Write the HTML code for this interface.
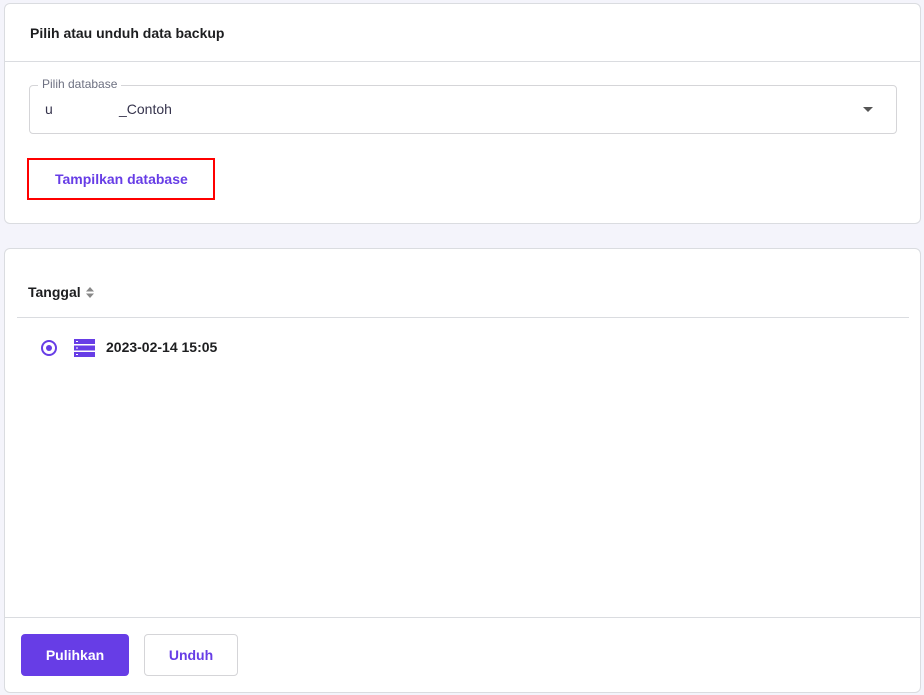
<!DOCTYPE html><html><head><style>
body{margin:0;width:924px;height:695px;background:#f4f4fb;font-family:"Liberation Sans",sans-serif;position:relative;overflow:hidden}
.c{position:absolute;background:#fff;border:1px solid #dadce0;border-radius:6px;box-sizing:border-box}
.a{position:absolute}
</style></head><body>
<div class="c" style="left:4px;top:3px;width:917px;height:221px">
<div class="a" style="left:25px;top:21px;font-size:14px;font-weight:bold;color:#1d1e20">Pilih atau unduh data backup</div>
<div class="a" style="left:0;top:57px;width:915px;border-top:1px solid #dadce0"></div>
<div class="a" style="left:24px;top:81px;width:866px;height:47px;border:1px solid #d5d5d8;border-radius:4px"></div>
<div class="a" style="left:33px;top:73px;background:#fff;padding:0 4px;font-size:12px;color:#6d7081">Pilih database</div>
<div class="a" style="left:40px;top:97px;font-size:14px;color:#36344d">u</div>
<div class="a" style="left:114px;top:97px;font-size:14px;color:#36344d">_Contoh</div>
<div class="a" style="left:858px;top:103px;border-left:5px solid transparent;border-right:5px solid transparent;border-top:5px solid #555"></div>
<div class="a" style="left:22px;top:154px;width:184px;height:38px;border:2px solid #f00;box-sizing:content-box"></div>
<div class="a" style="left:50px;top:167px;font-size:14px;font-weight:bold;color:#673de6">Tampilkan database</div>
</div>
<div class="c" style="left:4px;top:248px;width:917px;height:445px">
<div class="a" style="left:23px;top:35px;font-size:14px;font-weight:bold;color:#1d1e20">Tanggal</div>
<svg class="a" style="left:81px;top:38px" width="8" height="11"><path d="M0 4.5L4 0L8 4.5Z M0 6.5L4 11L8 6.5Z" fill="#888"/></svg>
<div class="a" style="left:12px;top:68px;width:892px;border-top:1px solid #dadce0"></div>
<div class="a" style="left:36px;top:91px;width:12px;height:12px;border:2px solid #673de6;border-radius:50%"></div>
<div class="a" style="left:41px;top:96px;width:6px;height:6px;background:#673de6;border-radius:50%"></div>
<svg class="a" style="left:69px;top:90px" width="21" height="18"><rect width="21" height="5" fill="#673de6"/><rect y="6.5" width="21" height="5" fill="#673de6"/><rect y="13" width="21" height="5" fill="#673de6"/><rect x="2" y="2" width="2" height="1" fill="#fff"/><rect x="2" y="8.5" width="2" height="1" fill="#fff"/><rect x="2" y="15" width="2" height="1" fill="#fff"/></svg>
<div class="a" style="left:101px;top:90px;font-size:14px;font-weight:bold;color:#1d1e20">2023-02-14 15:05</div>
<div class="a" style="left:0;top:368px;width:915px;border-top:1px solid #dadce0"></div>
<div class="a" style="left:16px;top:385px;width:108px;height:42px;background:#673de6;border-radius:4px;color:#fff;font-size:14px;font-weight:bold;line-height:42px;text-align:center">Pulihkan</div>
<div class="a" style="left:139px;top:385px;width:94px;height:42px;border:1px solid #d5d5d8;box-sizing:border-box;border-radius:4px;color:#673de6;font-size:14px;font-weight:bold;line-height:40px;text-align:center">Unduh</div>
</div>
</body></html>
